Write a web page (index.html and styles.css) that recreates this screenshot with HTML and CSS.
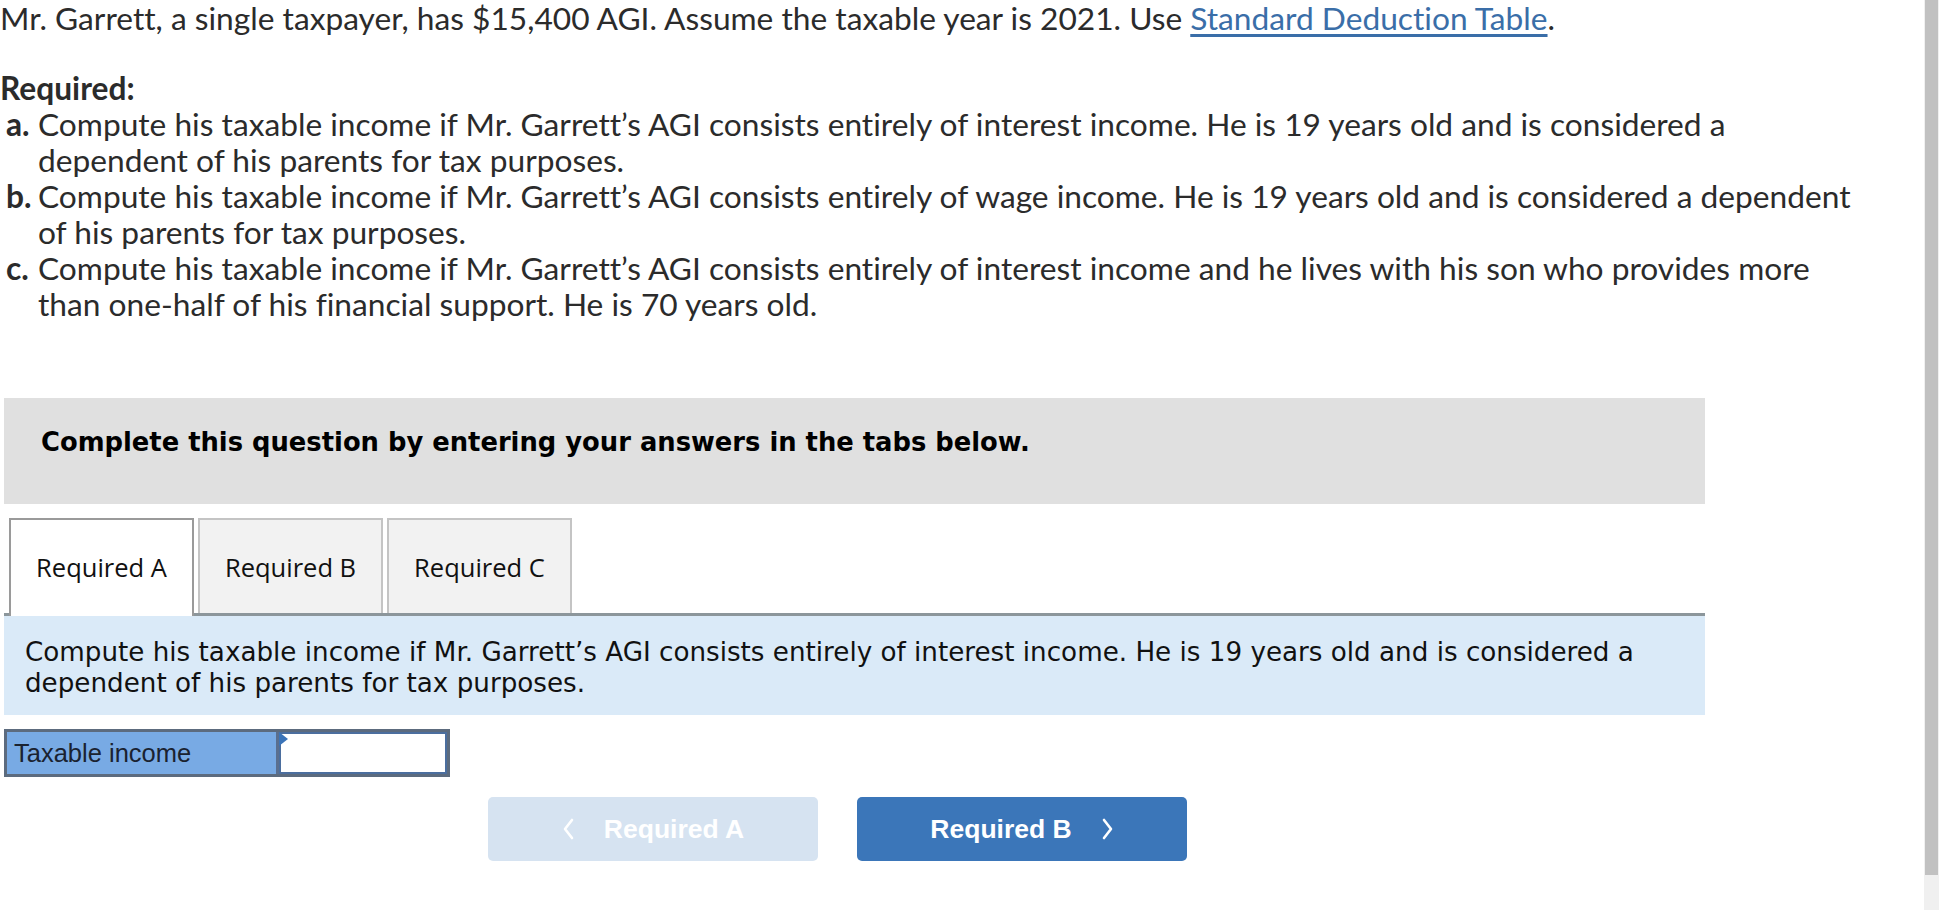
FILE: index.html
```html
<!DOCTYPE html>
<html>
<head>
<meta charset="utf-8">
<link rel="stylesheet" href="styles.css">
</head>
<body>
<div class="page">
  <main class="content">
    <div class="question">
      <p class="intro">Mr. Garrett, a single taxpayer, has $15,400 AGI. Assume the taxable year is 2021. Use <a class="link" href="#">Standard Deduction Table</a>.</p>
      <p class="req-title">Required:</p>
      <ol class="req-list">
        <li><span class="mark">a.</span><span class="body">Compute his taxable income if Mr. Garrett’s AGI consists entirely of interest income. He is 19 years old and is considered a dependent of his parents for tax purposes.</span></li>
        <li><span class="mark">b.</span><span class="body">Compute his taxable income if Mr. Garrett’s AGI consists entirely of wage income. He is 19 years old and is considered a dependent of his parents for tax purposes.</span></li>
        <li><span class="mark">c.</span><span class="body">Compute his taxable income if Mr. Garrett’s AGI consists entirely of interest income and he lives with his son who provides more than one-half of his financial support. He is 70 years old.</span></li>
      </ol>
    </div>

    <section class="panel">
      <div class="banner">Complete this question by entering your answers in the tabs below.</div>
      <div class="tabs">
        <div class="tab active">Required A</div>
        <div class="tab">Required B</div>
        <div class="tab">Required C</div>
      </div>
      <div class="tab-body">Compute his taxable income if Mr. Garrett’s AGI consists entirely of interest income. He is 19 years old and is considered a dependent of his parents for tax purposes.</div>
      <div class="answer-row">
        <div class="answer-label">Taxable income</div>
        <div class="answer-input"><span class="marker"></span></div>
      </div>
      <div class="nav">
        <button class="nav-btn disabled">
          <svg class="chev" width="12" height="22" viewBox="0 0 12 22"><path d="M10 2 L3 11 L10 20" fill="none" stroke="#ffffff" stroke-width="2.6" stroke-linecap="round" stroke-linejoin="round"/></svg>
          <span>Required A</span>
        </button>
        <button class="nav-btn primary">
          <span>Required B</span>
          <svg class="chev" width="12" height="22" viewBox="0 0 12 22"><path d="M2 2 L9 11 L2 20" fill="none" stroke="#ffffff" stroke-width="2.6" stroke-linecap="round" stroke-linejoin="round"/></svg>
        </button>
      </div>
    </section>
  </main>
  <div class="scrollbar"><div class="thumb"></div></div>
</div>
</body>
</html>
```

FILE: styles.css
```css
html, body {
  margin: 0;
  padding: 0;
  background: #ffffff;
}

.page {
  display: flex;
  width: 1939px;
  height: 910px;
  overflow: hidden;
}

.content {
  flex: 1;
  min-width: 0;
}

.question {
  width: 1860px;
  font-family: "Lato", "Liberation Sans", sans-serif;
  font-size: 31.7px;
  line-height: 36px;
  color: #2b2b2b;
  font-variant-ligatures: none;
}

.question p {
  margin: 0;
}

.intro {
  margin-bottom: 34px !important;
}

.link {
  color: #3a6ea8;
  text-decoration: underline;
  text-underline-offset: 4px;
}

.req-title {
  font-weight: 700;
}

.req-list {
  list-style: none;
  margin: 0;
  padding: 0 0 0 6px;
}

.req-list li {
  display: flex;
}

.mark {
  font-weight: 700;
  width: 32px;
  flex: none;
}

.panel {
  margin: 76px 0 0 4px;
  width: 1701px;
}

.banner {
  background: #e0e0e0;
  height: 106px;
  box-sizing: border-box;
  padding: 29px 0 0 37px;
  font-family: "DejaVu Sans", Verdana, sans-serif;
  font-weight: 700;
  font-size: 25.8px;
  line-height: 30px;
  color: #000;
}

.tabs {
  display: flex;
  align-items: flex-start;
  gap: 4px;
  margin-top: 14px;
  padding-left: 5px;
  border-bottom: 3px solid #8c969b;
}

.tab {
  width: 185px;
  height: 95px;
  box-sizing: border-box;
  border: 2px solid #c4c4c4;
  border-bottom: none;
  background: #f2f2f2;
  display: flex;
  align-items: center;
  justify-content: center;
  font-family: "Open Sans", "Noto Sans", sans-serif;
  font-size: 25.5px;
  color: #111;
}

.tab.active {
  background: #fff;
  border-color: #9a9a9a;
  height: 98px;
  margin-bottom: -3px;
  padding-bottom: 3px;
}

.tab-body {
  background: #daeaf8;
  height: 99px;
  box-sizing: border-box;
  padding: 21px 21px 0;
  font-family: "DejaVu Sans", Verdana, sans-serif;
  font-size: 26.2px;
  line-height: 31px;
  color: #111;
}

.answer-row {
  display: flex;
  margin-top: 14px;
  width: 446px;
  height: 48px;
  box-sizing: border-box;
  border: 3px solid #5c6b7e;
}

.answer-label {
  width: 272px;
  background: #78aae4;
  font-family: "Liberation Sans", Arial, sans-serif;
  font-size: 25.5px;
  color: #1a2230;
  display: flex;
  align-items: center;
  padding-left: 7px;
  box-sizing: border-box;
  border-right: 3px solid #5a6f8f;
}

.answer-input {
  flex: 1;
  position: relative;
  background: #fff;
  border: 2px solid #4b6e9e;
}

.marker {
  position: absolute;
  left: -2px;
  top: -2px;
  width: 0;
  height: 0;
  border-top: 7px solid transparent;
  border-bottom: 7px solid transparent;
  border-left: 9px solid #3b74b8;
}

.nav {
  display: flex;
  gap: 39px;
  margin: 20px 0 0 484px;
}

.nav-btn {
  width: 330px;
  height: 64px;
  border: none;
  border-radius: 5px;
  display: flex;
  align-items: center;
  justify-content: center;
  gap: 30px;
  font-family: "Liberation Sans", Arial, sans-serif;
  font-weight: 700;
  font-size: 26.5px;
  color: #fff;
  padding: 0;
}

.chev {
  display: block;
  flex: none;
}

.nav-btn.disabled {
  background: #d6e3f1;
}

.nav-btn.primary {
  background: #3b76b9;
}

.scrollbar {
  width: 15px;
  flex: none;
  background: #f0f0f0;
  display: flex;
  flex-direction: column;
}

.thumb {
  height: 875px;
  background: #c1c1c1;
  margin: 0 1px;
}
```
